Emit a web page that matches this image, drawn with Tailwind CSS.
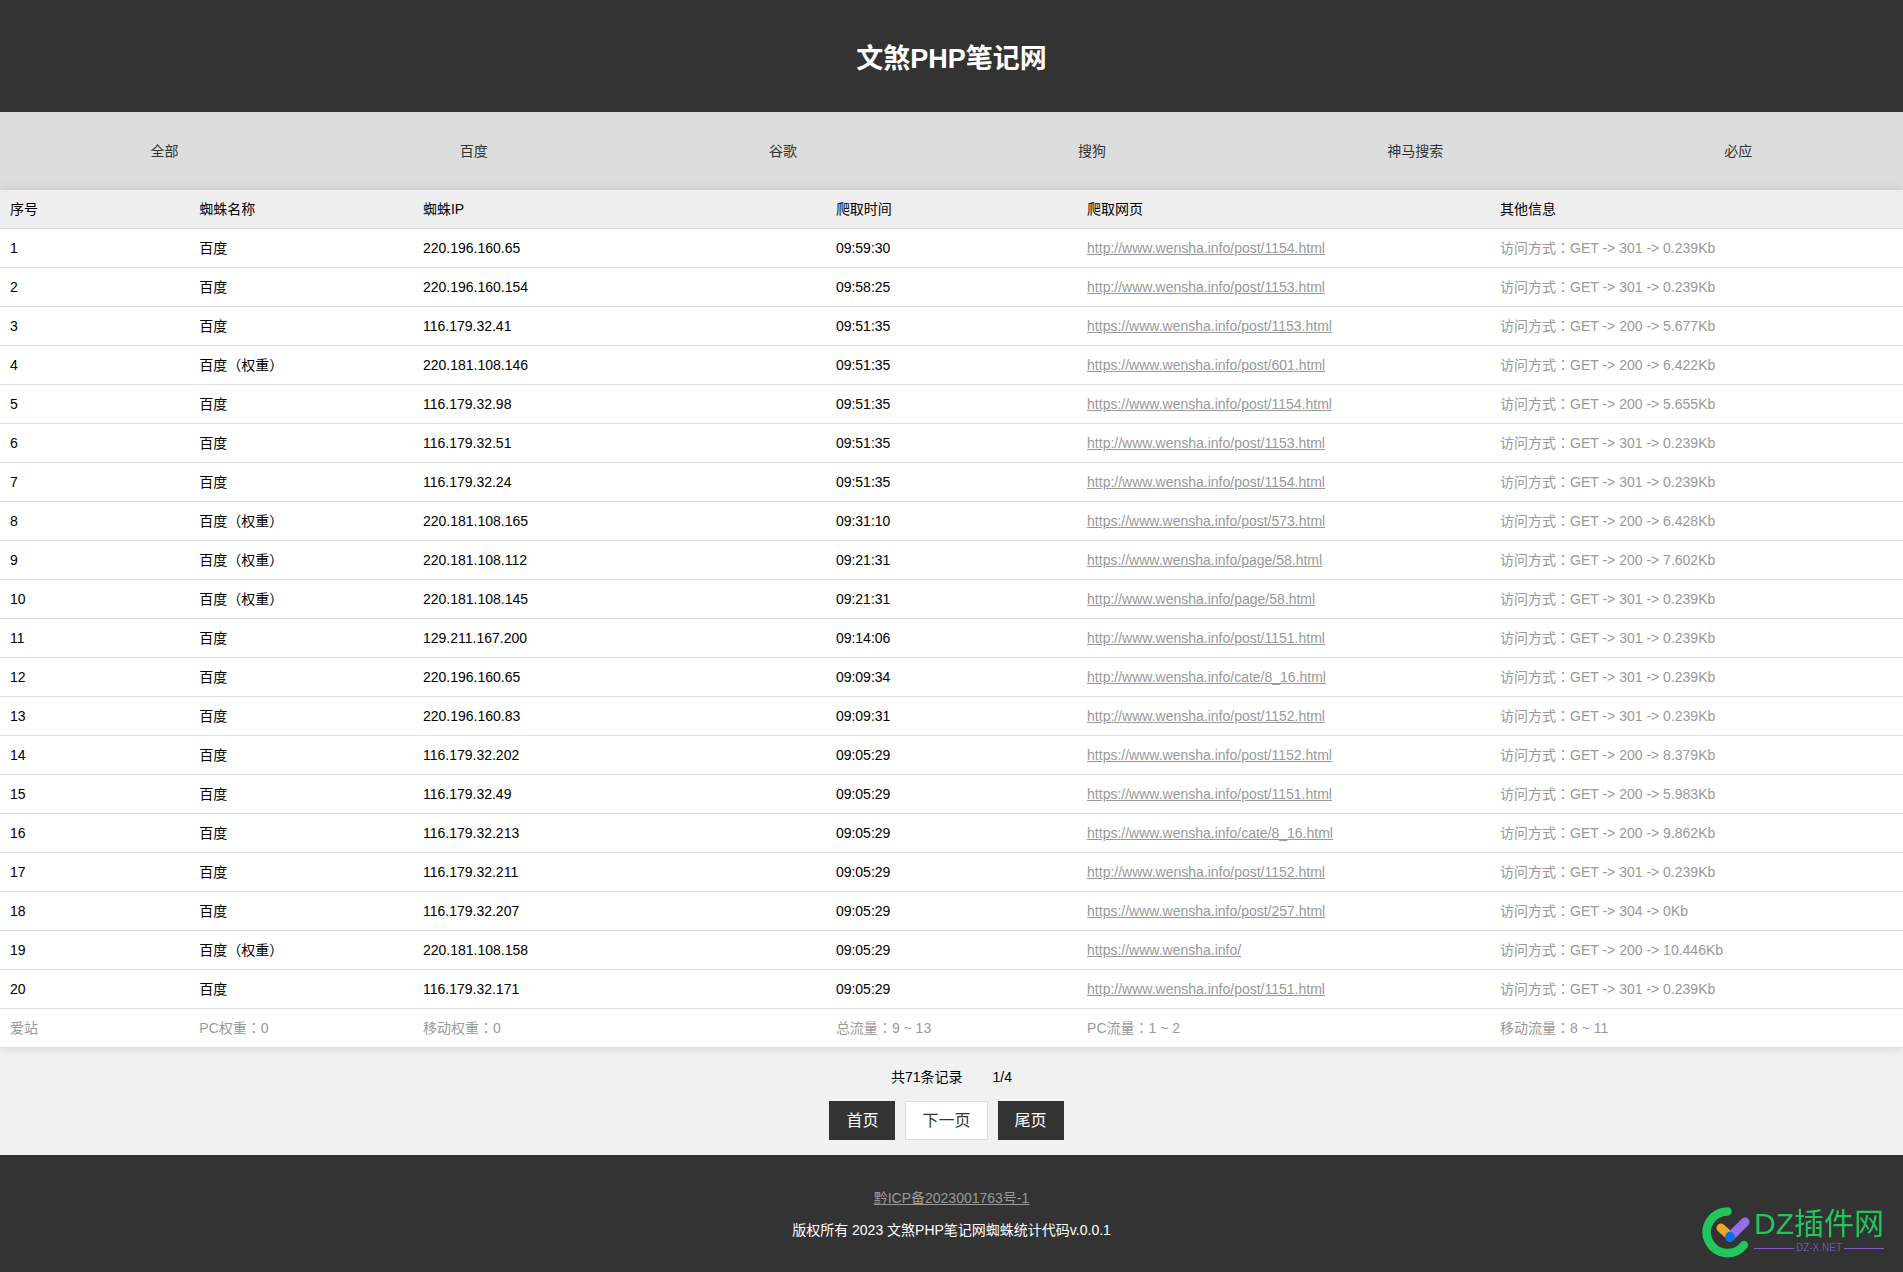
<!DOCTYPE html>
<html lang="zh-CN">
<head>
<meta charset="utf-8">
<meta name="viewport" content="width=device-width, initial-scale=1">
<title>文煞PHP笔记网</title>
<script src="https://cdn.jsdelivr.net/npm/@tailwindcss/browser@4"></script>
</head>
<body class="min-h-screen flex flex-col bg-[#f1f1f1] text-black text-[14px] leading-[18px] font-['Liberation_Sans','Noto_Sans_CJK_SC',sans-serif]">
<header class="bg-[#333] text-white text-center px-5 pt-[43px] pb-[37px]">
  <h1 class="text-[27px] leading-8 font-bold">文煞PHP笔记网</h1>
</header>
<nav class="bg-[#ddd] text-[#333] flex justify-around px-2.5 py-[30px]">
  <a href="#">全部</a>
  <a href="#">百度</a>
  <a href="#">谷歌</a>
  <a href="#">搜狗</a>
  <a href="#">神马搜索</a>
  <a href="#">必应</a>
</nav>
<main class="grow">
  <table class="w-full table-fixed border-separate border-spacing-0 bg-white shadow-[0_0_10px_rgba(0,0,0,0.12)]">
    <colgroup>
      <col class="w-[9.95%]"><col class="w-[11.75%]"><col class="w-[21.7%]"><col class="w-[13.2%]"><col class="w-[21.7%]"><col class="w-[21.7%]">
    </colgroup>
    <thead>
      <tr class="h-[39px] bg-[#eee] text-left *:border-b *:border-[#ddd] *:px-2.5 *:font-normal">
        <th>序号</th><th>蜘蛛名称</th><th>蜘蛛IP</th><th>爬取时间</th><th>爬取网页</th><th>其他信息</th>
      </tr>
    </thead>
    <tbody id="rows"></tbody>
    <tfoot>
      <tr class="h-[39px] text-[#999] *:border-b *:border-[#ddd] *:px-2.5">
        <td>爱站</td>
        <td>PC权重<span class="leading-none font-['Noto_Sans_CJK_TC',sans-serif]" lang="zh-TW">：</span>0</td>
        <td>移动权重<span class="leading-none font-['Noto_Sans_CJK_TC',sans-serif]" lang="zh-TW">：</span>0</td>
        <td>总流量<span class="leading-none font-['Noto_Sans_CJK_TC',sans-serif]" lang="zh-TW">：</span>9 ~ 13</td>
        <td>PC流量<span class="leading-none font-['Noto_Sans_CJK_TC',sans-serif]" lang="zh-TW">：</span>1 ~ 2</td>
        <td>移动流量<span class="leading-none font-['Noto_Sans_CJK_TC',sans-serif]" lang="zh-TW">：</span>8 ~ 11</td>
      </tr>
    </tfoot>
  </table>
  <div class="flex flex-col items-center gap-[15px] pt-5 pb-[15px]">
    <p class="flex gap-[30px]"><span>共71条记录</span><span>1/4</span></p>
    <div class="flex text-[16px] leading-[21px]">
      <button type="button" class="mr-2.5 h-[39px] px-4 border border-[#333] bg-[#333] text-white">首页</button>
      <button type="button" class="mr-2.5 h-[39px] px-4 border border-[#ddd] bg-white text-[#333]">下一页</button>
      <button type="button" class="mr-2.5 h-[39px] px-4 border border-[#333] bg-[#333] text-white">尾页</button>
    </div>
  </div>
</main>
<footer class="bg-[#333] text-white text-center flex flex-col items-center gap-3.5 pt-[34px] pb-[33px]">
  <a href="#" class="text-[#999] underline">黔ICP备2023001763号-1</a>
  <p>版权所有 2023 文煞PHP笔记网蜘蛛统计代码v.0.0.1</p>
</footer>
<div class="fixed right-[19px] bottom-[14px] flex items-start gap-1">
  <svg class="w-12 h-[52px]" viewBox="0 0 48 52" fill="none" stroke-linecap="round">
    <path d="M25.500 5.500A20.800 20.800 0 1 0 42 39" stroke="#22c55e" stroke-width="8.500"/>
    <path d="M19 22L28 30" stroke="#f0a52b" stroke-width="9"/>
    <path d="M43 16L28 31" stroke="#9370e8" stroke-width="9"/>
    <circle cx="28" cy="31" r="5" fill="#0a6fe8"/>
  </svg>
  <div>
    <div class="text-[30px] leading-9 text-[#22c55e] font-normal">DZ插件网</div>
    <div class="flex items-center gap-0.5 text-[10px] leading-3 text-[#7059ad]"><span class="grow h-px bg-[#7d5fc4]"></span>DZ-X.NET<span class="grow h-px bg-[#7d5fc4]"></span></div>
  </div>
</div>
<script>
const P = 'www.wensha.info/';
const visits = [
  ['百度','220.196.160.65','09:59:30','http://'+P+'post/1154.html','301','0.239'],
  ['百度','220.196.160.154','09:58:25','http://'+P+'post/1153.html','301','0.239'],
  ['百度','116.179.32.41','09:51:35','https://'+P+'post/1153.html','200','5.677'],
  ['百度（权重）','220.181.108.146','09:51:35','https://'+P+'post/601.html','200','6.422'],
  ['百度','116.179.32.98','09:51:35','https://'+P+'post/1154.html','200','5.655'],
  ['百度','116.179.32.51','09:51:35','http://'+P+'post/1153.html','301','0.239'],
  ['百度','116.179.32.24','09:51:35','http://'+P+'post/1154.html','301','0.239'],
  ['百度（权重）','220.181.108.165','09:31:10','https://'+P+'post/573.html','200','6.428'],
  ['百度（权重）','220.181.108.112','09:21:31','https://'+P+'page/58.html','200','7.602'],
  ['百度（权重）','220.181.108.145','09:21:31','http://'+P+'page/58.html','301','0.239'],
  ['百度','129.211.167.200','09:14:06','http://'+P+'post/1151.html','301','0.239'],
  ['百度','220.196.160.65','09:09:34','http://'+P+'cate/8_16.html','301','0.239'],
  ['百度','220.196.160.83','09:09:31','http://'+P+'post/1152.html','301','0.239'],
  ['百度','116.179.32.202','09:05:29','https://'+P+'post/1152.html','200','8.379'],
  ['百度','116.179.32.49','09:05:29','https://'+P+'post/1151.html','200','5.983'],
  ['百度','116.179.32.213','09:05:29','https://'+P+'cate/8_16.html','200','9.862'],
  ['百度','116.179.32.211','09:05:29','http://'+P+'post/1152.html','301','0.239'],
  ['百度','116.179.32.207','09:05:29','https://'+P+'post/257.html','304','0'],
  ['百度（权重）','220.181.108.158','09:05:29','https://'+P+'','200','10.446'],
  ['百度','116.179.32.171','09:05:29','http://'+P+'post/1151.html','301','0.239'],
];
// Full-width punctuation is set centred in its box.
const centred = text => text.replace(/[（）：]/g, c => `<span class="leading-none font-['Noto_Sans_CJK_TC',sans-serif]" lang="zh-TW">${c}</span>`);
document.getElementById('rows').innerHTML = visits.map(([name, ip, time, url, status, size], i) =>
  `<tr class="h-[39px] *:border-b *:border-[#ddd] *:px-2.5"><td>${i + 1}</td><td>${centred(name)}</td><td>${ip}</td><td>${time}</td><td><a href="${url}" class="text-[#999] underline">${url}</a></td><td class="text-[#999]">${centred('访问方式：')}GET -&gt; ${status} -&gt; ${size}Kb</td></tr>`
).join('');
</script>
</body>
</html>
